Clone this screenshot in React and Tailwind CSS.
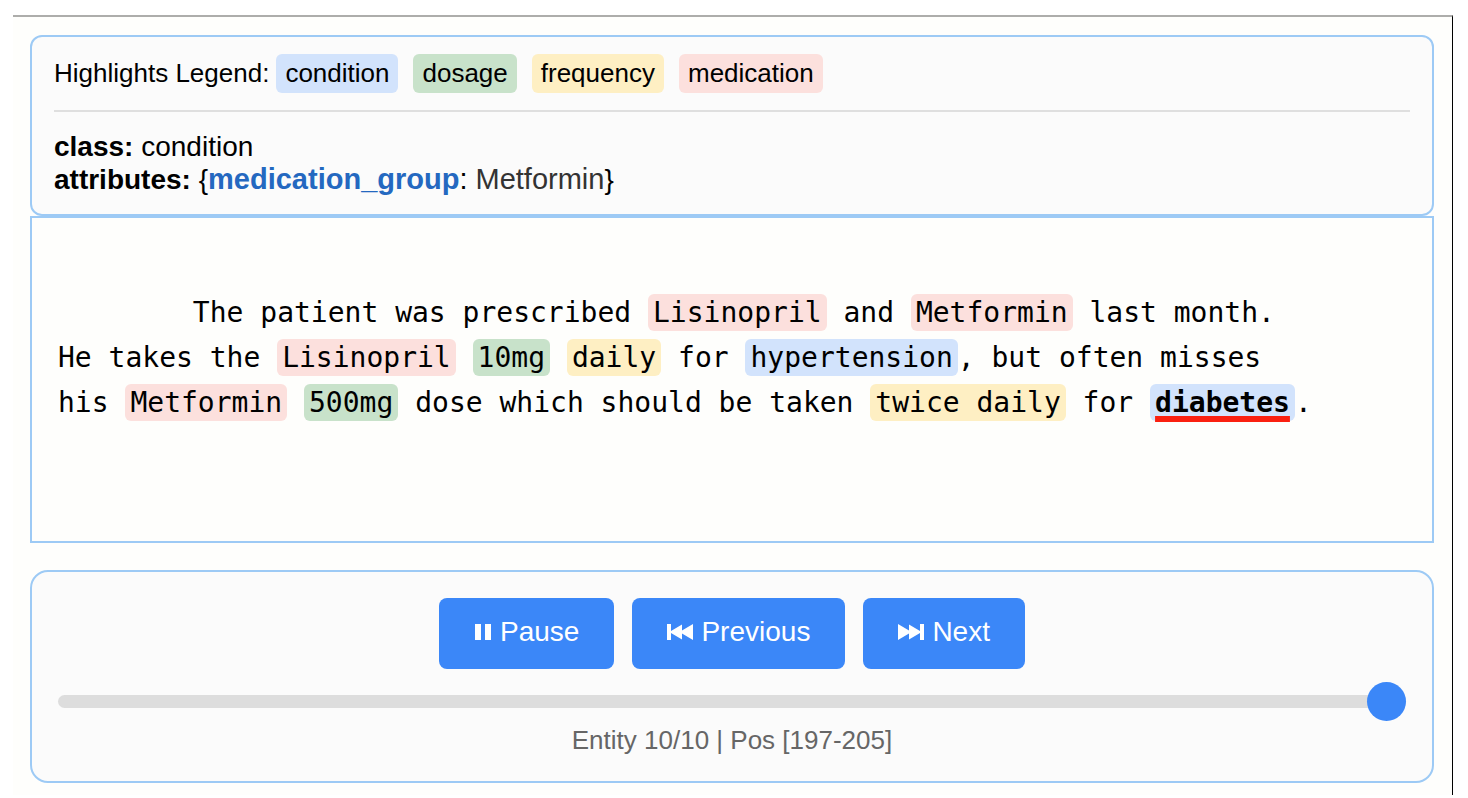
import React, { useEffect, useState } from "react";

const colors = {
  condition: "bg-[#d2e3fc]",
  dosage: "bg-[#c8e2ca]",
  frequency: "bg-[#feefc3]",
  medication: "bg-[#fce0dd]",
};

// pieces of the note, the ones with a type are extracted entities
const lines = [
  [
    { text: "        The patient was prescribed " },
    { text: "Lisinopril", type: "medication", id: 1 },
    { text: " and " },
    { text: "Metformin", type: "medication", id: 2 },
    { text: " last month." },
  ],
  [
    { text: "He takes the " },
    { text: "Lisinopril", type: "medication", id: 3 },
    { text: " " },
    { text: "10mg", type: "dosage", id: 4 },
    { text: " " },
    { text: "daily", type: "frequency", id: 5 },
    { text: " for " },
    { text: "hypertension", type: "condition", id: 6, group: "Lisinopril" },
    { text: ", but often misses" },
  ],
  [
    { text: "his " },
    { text: "Metformin", type: "medication", id: 7 },
    { text: " " },
    { text: "500mg", type: "dosage", id: 8 },
    { text: " dose which should be taken " },
    { text: "twice daily", type: "frequency", id: 9 },
    { text: " for " },
    { text: "diabetes", type: "condition", id: 10, group: "Metformin" },
    { text: "." },
  ],
];

let offset = 0;
const entities = [];
lines.forEach((line) => {
  line.forEach((part) => {
    if (part.type) {
      entities.push({
        ...part,
        group: part.group || (part.id < 7 && part.id !== 2 ? "Lisinopril" : "Metformin"),
        start: offset,
        end: offset + part.text.length,
      });
    }
    offset += part.text.length;
  });
  offset += 1;
});
const shift = 197 - entities[entities.length - 1].start;

function PauseIcon() {
  return (
    <svg width="18" height="16" viewBox="0 0 18 16" fill="currentColor" aria-hidden="true">
      <path d="M1 0h6v16H1zM11 0h6v16h-6z" />
    </svg>
  );
}

function PlayIcon() {
  return (
    <svg width="18" height="16" viewBox="0 0 18 16" fill="currentColor" aria-hidden="true">
      <path d="M2 0l14 8-14 8z" />
    </svg>
  );
}

function PreviousIcon() {
  return (
    <svg width="26" height="16" viewBox="0 0 26 16" fill="currentColor" aria-hidden="true">
      <path d="M0 0h4v7l11-6.500v6L26 0v16l-11-6.500v6L4 9v7H0z" />
    </svg>
  );
}

function NextIcon() {
  return (
    <svg width="26" height="16" viewBox="0 0 26 16" fill="currentColor" aria-hidden="true">
      <path d="M26 0h-4v7L11 .5v6L0 0v16l11-6.500v6L22 9v7h4z" />
    </svg>
  );
}

function ControlButton({ icon, label, onClick }) {
  return (
    <button
      onClick={onClick}
      className="flex items-center gap-2 rounded-lg bg-[#3b87f8] px-[35px] pt-3 pb-4 text-[28px] leading-[43px] text-white cursor-pointer hover:bg-[#2f78e6]"
    >
      {icon}
      <span>{label}</span>
    </button>
  );
}

function App() {
  const [current, setCurrent] = useState(entities.length - 1);
  const [playing, setPlaying] = useState(false);
  const [started, setStarted] = useState(true);
  const entity = entities[current];

  useEffect(() => {
    if (!playing) return;
    const timer = setInterval(() => {
      setCurrent((c) => (c + 1) % entities.length);
    }, 1000);
    return () => clearInterval(timer);
  }, [playing]);

  const togglePlay = () => {
    setPlaying(!started);
    setStarted(!started);
  };

  const move = (step) => {
    setCurrent((current + step + entities.length) % entities.length);
  };

  return (
    <div className="min-h-screen bg-white pt-[15px] pr-[15px] pb-[3px] pl-[13px] font-['Liberation_Sans',Arial,sans-serif] text-black">
      <main className="border-t-2 border-r border-t-[#adadab] border-r-black bg-[#fefefc] pt-[18px] pr-[18px] pb-3 pl-[17px]">
        <section className="rounded-xl border-2 border-[#9dcaf5] bg-[#fbfbfb] px-[22px] pt-[17px] pb-[18px]">
          <div className="flex flex-wrap items-center border-b-2 border-[#dfdfdf] pb-[17px] text-[26px] leading-[39px]">
            <span className="mr-[7px]">Highlights Legend:</span>
            <div className="flex flex-wrap gap-[15px]">
              {Object.keys(colors).map((name) => (
                <span key={name} className={`rounded-md px-[9px] ${colors[name]}`}>
                  {name}
                </span>
              ))}
            </div>
          </div>
          <div className="pt-[18px] text-[28px] leading-[33px]">
            <p>
              <b>class:</b> {entity.type}
            </p>
            <p>
              <b>attributes:</b> {"{"}
              <span className="text-[29px]">
                <b className="text-[#2468c0]">medication_group</b>:{" "}
                <span className="text-[#333333]">{entity.group}</span>
              </span>
              {"}"}
            </p>
          </div>
        </section>

        <section className="border-2 border-[#9dcaf5] px-[26px] pt-[72px] pb-[116px] font-['DejaVu_Sans_Mono',monospace] text-[28px] leading-[45px] whitespace-pre-wrap">
          {lines.map((line, i) => (
            <p key={i}>
              {line.map((part, j) =>
                part.type ? (
                  <span
                    key={j}
                    className={`rounded-md px-[5px] py-0.5 ${colors[part.type]} ${
                      part.id === entity.id
                        ? "font-bold underline decoration-[#fa2010] decoration-[6px] underline-offset-[4px] [text-decoration-skip-ink:none]"
                        : ""
                    }`}
                  >
                    {part.text}
                  </span>
                ) : (
                  part.text
                )
              )}
            </p>
          ))}
        </section>

        <section className="mt-[27px] rounded-[18px] border-2 border-[#9dcaf5] bg-[#fbfbfb] px-[26px] pt-[26px] pb-6">
          <div className="flex flex-wrap justify-center gap-[18px]">
            <ControlButton
              icon={started ? <PauseIcon /> : <PlayIcon />}
              label={started ? "Pause" : "Play"}
              onClick={togglePlay}
            />
            <ControlButton icon={<PreviousIcon />} label="Previous" onClick={() => move(-1)} />
            <ControlButton icon={<NextIcon />} label="Next" onClick={() => move(1)} />
          </div>
          <input
            type="range"
            aria-label="Entity"
            min="0"
            max={entities.length - 1}
            value={current}
            onChange={(e) => setCurrent(Number(e.target.value))}
            className="mt-[26px] block h-[13px] w-full cursor-pointer appearance-none rounded-full bg-[#dddddd] [&::-webkit-slider-thumb]:h-[39px] [&::-webkit-slider-thumb]:w-[39px] [&::-webkit-slider-thumb]:appearance-none [&::-webkit-slider-thumb]:rounded-full [&::-webkit-slider-thumb]:bg-[#3b87f8]"
          />
          <p className="mt-[15px] text-center text-[26px] leading-[34px] text-[#666666]">
            Entity {current + 1}/{entities.length} | Pos [{entity.start + shift}-{entity.end + shift}]
          </p>
        </section>
      </main>
    </div>
  );
}

export default App;
